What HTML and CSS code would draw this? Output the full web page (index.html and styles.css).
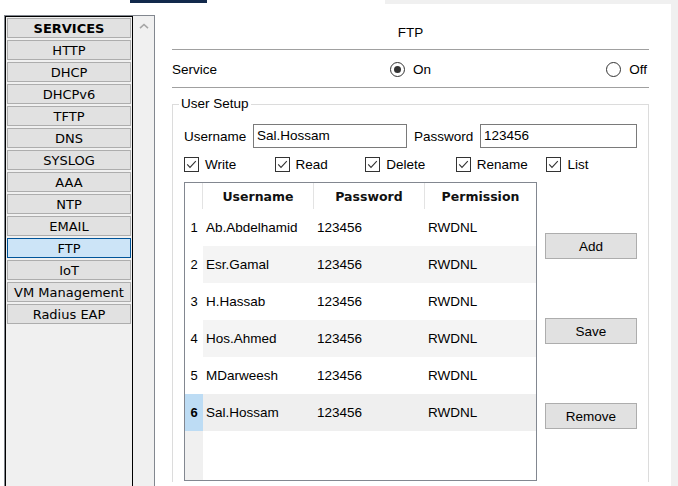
FILE: index.html
```html
<!DOCTYPE html>
<html>
<head>
<meta charset="utf-8">
<title>FTP</title>
<link rel="stylesheet" href="styles.css">
</head>
<body>
<div class="topstrip">
  <div class="ts-gap1"></div>
  <div class="ts-tab"></div>
  <div class="ts-gap2"></div>
  <div class="ts-rest"></div>
</div>
<div class="page">
  <aside class="side">
    <div class="sidebox">
      <div class="svc-list">
        <div class="svc svc-head">SERVICES</div>
        <div class="svc">HTTP</div>
        <div class="svc">DHCP</div>
        <div class="svc">DHCPv6</div>
        <div class="svc">TFTP</div>
        <div class="svc">DNS</div>
        <div class="svc">SYSLOG</div>
        <div class="svc">AAA</div>
        <div class="svc">NTP</div>
        <div class="svc">EMAIL</div>
        <div class="svc active">FTP</div>
        <div class="svc">IoT</div>
        <div class="svc">VM Management</div>
        <div class="svc">Radius EAP</div>
      </div>
      <div class="vscroll">
        <svg width="10" height="6" viewBox="0 0 10 6"><path d="M1 5.2 L5 1.5 L9 5.2" fill="none" stroke="#a6a6a6" stroke-width="1.6"/></svg>
      </div>
    </div>
  </aside>
  <main class="main">
    <div class="content">
      <div class="title">FTP</div>
      <div class="rule"></div>
      <div class="service-row">
        <span class="svc-label">Service</span>
        <span class="radio-opt"><span class="radio checked"></span>On</span>
        <span class="radio-opt off-opt"><span class="radio"></span>Off</span>
      </div>
      <div class="rule"></div>
      <fieldset class="user-setup">
        <legend>User Setup</legend>
        <div class="cred-row">
          <span class="lbl lbl-user">Username</span>
          <span class="field field-user">Sal.Hossam</span>
          <span class="lbl lbl-pass">Password</span>
          <span class="field field-pass">123456</span>
        </div>
        <div class="perm-row">
          <span class="perm"><span class="cbox"><svg width="13" height="13" viewBox="0 0 13 13"><path d="M2.2 6.4 L5 9.4 L10.8 3.2" fill="none" stroke="#333" stroke-width="1.1"/></svg></span>Write</span>
          <span class="perm"><span class="cbox"><svg width="13" height="13" viewBox="0 0 13 13"><path d="M2.2 6.4 L5 9.4 L10.8 3.2" fill="none" stroke="#333" stroke-width="1.1"/></svg></span>Read</span>
          <span class="perm"><span class="cbox"><svg width="13" height="13" viewBox="0 0 13 13"><path d="M2.2 6.4 L5 9.4 L10.8 3.2" fill="none" stroke="#333" stroke-width="1.1"/></svg></span>Delete</span>
          <span class="perm"><span class="cbox"><svg width="13" height="13" viewBox="0 0 13 13"><path d="M2.2 6.4 L5 9.4 L10.8 3.2" fill="none" stroke="#333" stroke-width="1.1"/></svg></span>Rename</span>
          <span class="perm"><span class="cbox"><svg width="13" height="13" viewBox="0 0 13 13"><path d="M2.2 6.4 L5 9.4 L10.8 3.2" fill="none" stroke="#333" stroke-width="1.1"/></svg></span>List</span>
        </div>
        <div class="grid-area">
          <div class="table">
            <div class="thead">
              <div class="rh hrh"></div>
              <div class="th">Username</div>
              <div class="th">Password</div>
              <div class="th last">Permission</div>
            </div>
            <div class="tr"><div class="rh">1</div><div class="td">Ab.Abdelhamid</div><div class="td">123456</div><div class="td">RWDNL</div></div>
            <div class="tr alt"><div class="rh">2</div><div class="td">Esr.Gamal</div><div class="td">123456</div><div class="td">RWDNL</div></div>
            <div class="tr"><div class="rh">3</div><div class="td">H.Hassab</div><div class="td">123456</div><div class="td">RWDNL</div></div>
            <div class="tr alt"><div class="rh">4</div><div class="td">Hos.Ahmed</div><div class="td">123456</div><div class="td">RWDNL</div></div>
            <div class="tr"><div class="rh">5</div><div class="td">MDarweesh</div><div class="td">123456</div><div class="td">RWDNL</div></div>
            <div class="tr sel"><div class="rh">6</div><div class="td">Sal.Hossam</div><div class="td">123456</div><div class="td">RWDNL</div></div>
            <div class="filler"><div class="rh"></div><div class="fill-rest"></div></div>
          </div>
          <div class="actions">
            <div class="btn btn-add">Add</div>
            <div class="btn">Save</div>
            <div class="btn">Remove</div>
          </div>
        </div>
      </fieldset>
    </div>
  </main>
  <div class="right-strip"></div>
</div>
</body>
</html>
```
FILE: styles.css
```css
html, body {
  margin: 0;
  padding: 0;
}
body {
  width: 678px;
  height: 486px;
  overflow: hidden;
  background: #ffffff;
  font-family: "Liberation Sans", Arial, sans-serif;
  font-size: 13.5px;
  color: #000;
}

/* top strip */
.topstrip {
  display: flex;
  height: 4px;
}
.ts-gap1 { width: 130px; }
.ts-tab { width: 77px; height: 3px; background: #12294b; }
.ts-gap2 { width: 178px; }
.ts-rest { flex: 1; background: #f0f0f0; }

.page {
  display: flex;
  height: 482px;
  overflow: hidden;
}

/* sidebar */
.side {
  width: 155px;
  flex: none;
  box-sizing: border-box;
  padding: 11px 0 0 4px;
}
.sidebox {
  width: 151px;
  height: 100%;
  box-sizing: border-box;
  display: flex;
  border: 1px solid #82878f;
  border-bottom: none;
}
.svc-list {
  width: 128px;
  flex: none;
  box-sizing: border-box;
  border: 1px solid #000;
  border-bottom: none;
  background: #f0f0f0;
  padding: 1px 1px;
}
.svc {
  height: 20px;
  box-sizing: border-box;
  border: 1px solid #adadad;
  background: #e1e1e1;
  margin-bottom: 2px;
  text-align: center;
  font-family: "DejaVu Sans", Verdana, sans-serif;
  font-size: 13px;
  line-height: 19px;
  color: #000;
  white-space: nowrap;
}
.svc-head { font-weight: bold; }
.svc.active {
  background: #cce4f7;
  border-color: #005499;
}
.vscroll {
  flex: 1;
  background: #f0f0f0;
  display: flex;
  justify-content: center;
  align-items: flex-start;
  padding-top: 7px;
}

/* main panel */
.main {
  width: 516px;
  flex: none;
  background: #fff;
}
.right-strip {
  flex: 1;
  background: #f0f0f0;
}
.content {
  margin-left: 17px;
  width: 477px;
}
.title {
  margin-top: 21px;
  height: 16px;
  line-height: 16px;
  text-align: center;
}
.rule {
  height: 1px;
  background: #a0a0a0;
  margin-top: 8px;
}
.service-row + .rule { margin-top: 0; }
.service-row {
  height: 37px;
  box-sizing: border-box;
  padding: 2px 2px 0 0;
  display: flex;
  align-items: center;
}
.svc-label { width: 218px; }
.radio-opt {
  display: flex;
  align-items: center;
}
.off-opt { margin-left: auto; }
.radio {
  width: 15px;
  height: 15px;
  box-sizing: border-box;
  border: 1px solid #333;
  border-radius: 50%;
  background: #fff;
  margin-right: 8px;
  display: flex;
  align-items: center;
  justify-content: center;
}
.radio.checked::after {
  content: "";
  width: 7px;
  height: 7px;
  border-radius: 50%;
  background: #333;
}

/* fieldset */
.user-setup {
  margin: 8px 0 0 0;
  width: 477px;
  height: 386px;
  box-sizing: border-box;
  border: 1px solid #dcdcdc;
  border-bottom: none;
  padding: 12px 11px 0 11px;
  min-width: 0;
}
.user-setup legend {
  padding: 0 2px;
  margin-left: -5px;
  line-height: 16px;
}
.cred-row {
  display: flex;
  align-items: center;
  height: 24px;
}
.lbl-user { width: 69px; }
.lbl-pass { width: 66px; margin-left: 7px; }
.field {
  height: 24px;
  box-sizing: border-box;
  border: 1px solid #7a7a7a;
  background: #fff;
  padding-left: 3px;
  line-height: 22px;
}
.field-user { width: 154px; }
.field-pass { width: 157px; }

.perm-row {
  display: flex;
  height: 15px;
  margin-top: 9px;
}
.perm {
  width: 92px;
  display: flex;
  align-items: center;
}
.cbox {
  width: 15px;
  height: 15px;
  box-sizing: border-box;
  border: 1px solid #333;
  background: #fff;
  margin-right: 6px;
  display: flex;
}

/* grid */
.grid-area {
  display: flex;
  margin-top: 10px;
}
.table {
  width: 353px;
  height: 299px;
  box-sizing: border-box;
  border: 1px solid #828790;
  display: flex;
  flex-direction: column;
  background: #fff;
}
.thead {
  display: flex;
  height: 26px;
  flex: none;
}
.th {
  width: 111px;
  box-sizing: border-box;
  border-right: 1px solid #e3e3e3;
  display: flex;
  align-items: center;
  justify-content: center;
  font-family: "DejaVu Sans", Verdana, sans-serif;
  font-weight: bold;
  font-size: 12.5px;
  color: #111;
}
.th.last { border-right: none; }
.hrh {
  border-right: 1px solid #e3e3e3;
  box-sizing: border-box;
}
.tr {
  display: flex;
  height: 37px;
  flex: none;
}
.tr.alt .td { background: #f4f4f4; }
.tr.sel .td { background: #efefef; }
.rh {
  width: 18px;
  flex: none;
  display: flex;
  align-items: center;
  justify-content: center;
  background: #fff;
  font-size: 13px;
}
.tr.sel .rh {
  background: #bddcf4;
  font-weight: bold;
}
.td {
  width: 111px;
  box-sizing: border-box;
  padding-left: 3px;
  display: flex;
  align-items: center;
  white-space: nowrap;
}
.filler {
  flex: 1;
  display: flex;
}
.filler .rh { background: #f0f0f0; }
.fill-rest { flex: 1; background: #fff; }

.actions {
  width: 92px;
  margin-left: 8px;
  display: flex;
  flex-direction: column;
}
.btn {
  height: 26px;
  box-sizing: border-box;
  border: 1px solid #adadad;
  background: #e1e1e1;
  display: flex;
  align-items: center;
  justify-content: center;
  margin-top: 59px;
}
.btn-add { margin-top: 51px; }
```
